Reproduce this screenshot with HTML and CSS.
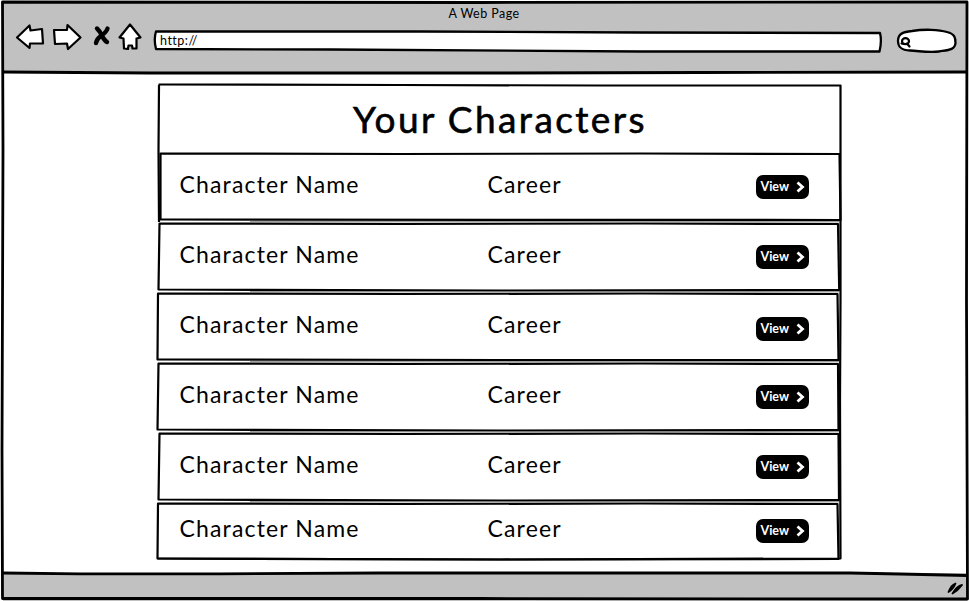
FILE: index.html
```html
<!DOCTYPE html>
<html lang="en">
<head>
<meta charset="utf-8">
<title>Your Characters</title>
<link rel="stylesheet" href="styles.css">
</head>
<body>
<div class="window">
  <header class="chrome">
    <div class="window-title">A Web Page</div>
    <div class="toolbar">
      <svg class="nav-icons" width="130" height="34" viewBox="14 20 130 34">
        <g class="outline">
          <path d="M17 37.5 L29.5 25.5 L30.5 30.5 L42 29 L43 43.5 L30 43.5 L29.5 48 Z"/>
          <path d="M54 30 L67 30 L67.5 25 L80.5 37.5 L68 49 L67 43.5 L55 44 Z"/>
          <path d="M130 24.5 L140.5 37.5 L136.5 38.5 L136.5 48.5 L132.500 48.500 L132 45.500 L128.500 45.500 L128 49 L124 48.500 L123.500 38.500 L119.500 37.500 Z"/>
        </g>
        <path class="cross" d="M97 28.500 Q100 31 102 36 Q105 41 107 42 M107.500 28.500 Q106.500 32 101 36 Q96.500 39 96 43"/>
      </svg>
      <div class="address">
        <svg class="field-shape" width="730" height="24" viewBox="153 29 730 24"><path d="M156 31.500 L420 31.500 L640 32.500 L880 33 Q882 41 879.500 51.500 L640 51.500 L330 49.500 L156 49 Q153.500 39 156 31.500 Z"/></svg>
        <span class="url">http://</span>
      </div>
      <svg class="search" width="62" height="28" viewBox="895 27 62 28">
        <path class="search-shape" d="M898 41 C898 33 904 32 912 31 C924 29 939 29.500 947 32 C955 34 955.500 38 955.500 43 C955 50 948 50 939 51.500 C929 53 920 51 910 50.500 C901 50 898 47 898 41 Z"/>
        <g class="lens"><ellipse cx="905.500" cy="41.200" rx="3.500" ry="3"/><path d="M901.500 43.500 L904 44 M907 43.500 L909.500 46.500"/></g>
      </svg>
    </div>
  </header>
  <main class="page">
    <section class="panel">
      <h1 class="heading">Your Characters</h1>
      <div class="row"><span class="name">Character Name</span><span class="career">Career</span><a class="view">View<svg class="chevron" width="9" height="12" viewBox="0 0 9 12"><path d="M1.500 1.500 L6.500 6 L1.500 10.500"/></svg></a></div>
      <div class="row"><span class="name">Character Name</span><span class="career">Career</span><a class="view">View<svg class="chevron" width="9" height="12" viewBox="0 0 9 12"><path d="M1.500 1.500 L6.500 6 L1.500 10.500"/></svg></a></div>
      <div class="row row-low"><span class="name">Character Name</span><span class="career">Career</span><a class="view">View<svg class="chevron" width="9" height="12" viewBox="0 0 9 12"><path d="M1.500 1.500 L6.500 6 L1.500 10.500"/></svg></a></div>
      <div class="row"><span class="name">Character Name</span><span class="career">Career</span><a class="view">View<svg class="chevron" width="9" height="12" viewBox="0 0 9 12"><path d="M1.500 1.500 L6.500 6 L1.500 10.500"/></svg></a></div>
      <div class="row"><span class="name">Character Name</span><span class="career">Career</span><a class="view">View<svg class="chevron" width="9" height="12" viewBox="0 0 9 12"><path d="M1.500 1.500 L6.500 6 L1.500 10.500"/></svg></a></div>
      <div class="row row-short"><span class="name">Character Name</span><span class="career">Career</span><a class="view">View<svg class="chevron" width="9" height="12" viewBox="0 0 9 12"><path d="M1.500 1.500 L6.500 6 L1.500 10.500"/></svg></a></div>
    </section>
  </main>
  <footer class="status"></footer>
  <svg class="sketch" width="969" height="601" viewBox="0 0 969 601">
    <path class="status-fill" d="M3 573.500 L200 573.500 L420 573 L700 573 L880 573.500 L967 575.500 L967 598 L3 598 Z"/>
    <path class="status-grip" d="M948.500 592 Q953 589.500 955.500 583.500 Q951 585 948.500 592 Z M952.500 593.500 Q958 590.500 962 585 Q957 586 952.500 593.500 Z"/>
    <g class="bold">
      <path d="M2.500 2 L480 2.500 L967 2 L966.500 300 L967.500 599 L480 598.500 L200 598.500 L2.500 598.500 L2 450 L3 150 Z"/>
      <path d="M3 72 L150 73 L500 73 L700 72.500 L967 72"/>
      <path d="M3 573 L80 573.800 L220 573.800 L380 573 L850 573 L900 574 L967 575.500"/>
    </g>
    <g class="thin">
      <path d="M158.500 84.500 L400 85 L600 85.500 L840.500 85.500 L840.500 300 L840 400 L840.500 558.500 L500 559.500 L157.500 558.500"/>
      <path d="M159 85 L158.500 150 L159 222"/>
      <path d="M160.500 153.500 L400 154 L640 153.500 L839.500 154 L840.500 220 L500 219.800 L160.500 219.500 Z"/>
      <path d="M159.500 223.500 L400 224 L640 223.500 L838 224 L839.200 290 L500 290.500 L158.500 289.500 Z"/>
      <path d="M158 293.500 L400 294 L640 293.500 L837.500 294 L838.500 360 L500 360 L157.500 359.500 Z"/>
      <path d="M158.500 363.500 L400 364 L640 363.500 L838 364 L838.500 430 L500 430.500 L157.500 429.500 Z"/>
      <path d="M159.500 433.500 L400 434 L640 433.500 L838.500 434 L839 500 L500 500.500 L158.500 499.500 Z"/>
      <path d="M158 503.500 L400 504 L640 503.500 L837.500 504 L838.500 559 L500 559.500 L157.500 558.500 Z"/>
    </g>
    <g class="seam">
      <path d="M250 221.800 L839 221.800"/>
      <path d="M250 291.800 L839 291.800"/>
      <path d="M250 361.800 L839 361.800"/>
      <path d="M250 431.800 L839 431.800"/>
      <path d="M250 501.800 L839 501.800"/>
    </g>
  </svg>
</div>
</body>
</html>
```

FILE: styles.css
```css
* { box-sizing: border-box; }
body { margin: 0; background: #fff; color: #000; font-family: Lato, sans-serif; }
.window { position: relative; display: flex; flex-direction: column; width: 969px; height: 601px; overflow: hidden; }
.chrome { height: 71px; margin: 2px 2px 0 3px; background: #c1c1c1; }
.window-title { height: 18px; padding: 4px 2px 0 0; font-size: 12.5px; line-height: 15px; text-align: center; letter-spacing: 0.45px; }
.toolbar { display: flex; align-items: flex-start; padding: 0 0 0 11px; }
.nav-icons { flex: none; }
.outline { fill: #fff; stroke: #000; stroke-width: 2.2; stroke-linejoin: round; }
.cross { fill: none; stroke: #000; stroke-width: 4.4; stroke-linecap: round; }
.address { display: grid; width: 730px; margin: 9px 0 0 9px; }
.field-shape, .url { grid-area: 1 / 1; }
.field-shape { fill: #fff; stroke: #000; stroke-width: 2.3; stroke-linejoin: round; }
.url { padding: 4px 0 0 7px; font-size: 12.5px; line-height: 15px; letter-spacing: 0.5px; }
.search { flex: none; margin: 7px 0 0 12px; }
.search-shape { fill: #fff; stroke: #000; stroke-width: 2.3; }
.lens { fill: none; stroke: #000; stroke-width: 2.2; stroke-linecap: round; }
.page { flex: 1; padding-top: 12px; }
.panel { width: 682px; margin-left: 159px; }
.heading { margin: 0; height: 69px; font-size: 37px; font-weight: 400; line-height: 68px; text-align: center; letter-spacing: 2.4px; -webkit-text-stroke: 0.6px #000; }
.row { display: grid; grid-template-columns: 308px 268px 53px; align-items: start; height: 70px; padding: 16px 0 0 20.5px; font-size: 23px; line-height: 29px; letter-spacing: 1.15px; }
.row-short { height: 56px; padding-top: 10px; }
.view { display: flex; align-items: center; justify-content: space-between; height: 24px; margin-top: 5px; padding: 0 4px 1px 5px; border-radius: 7px; background: #000; color: #fff; font-size: 12.5px; font-weight: 700; line-height: 23px; letter-spacing: 0; }
.row-low .view { margin-top: 7px; }
.chevron { fill: none; stroke: #fff; stroke-width: 2.8; }
.status { height: 28px; margin: 0 2px 0 3px; background: #c1c1c1; }
.sketch { position: absolute; inset: 0; pointer-events: none; fill: none; stroke: #000; stroke-linejoin: round; }
.bold { stroke-width: 2.8; }
.thin { stroke-width: 2.2; }
.seam { stroke: #777; stroke-width: 1; }
.status-fill { fill: #c1c1c1; stroke: none; }
.status-grip { fill: #000; stroke-width: 1.8; }
```
